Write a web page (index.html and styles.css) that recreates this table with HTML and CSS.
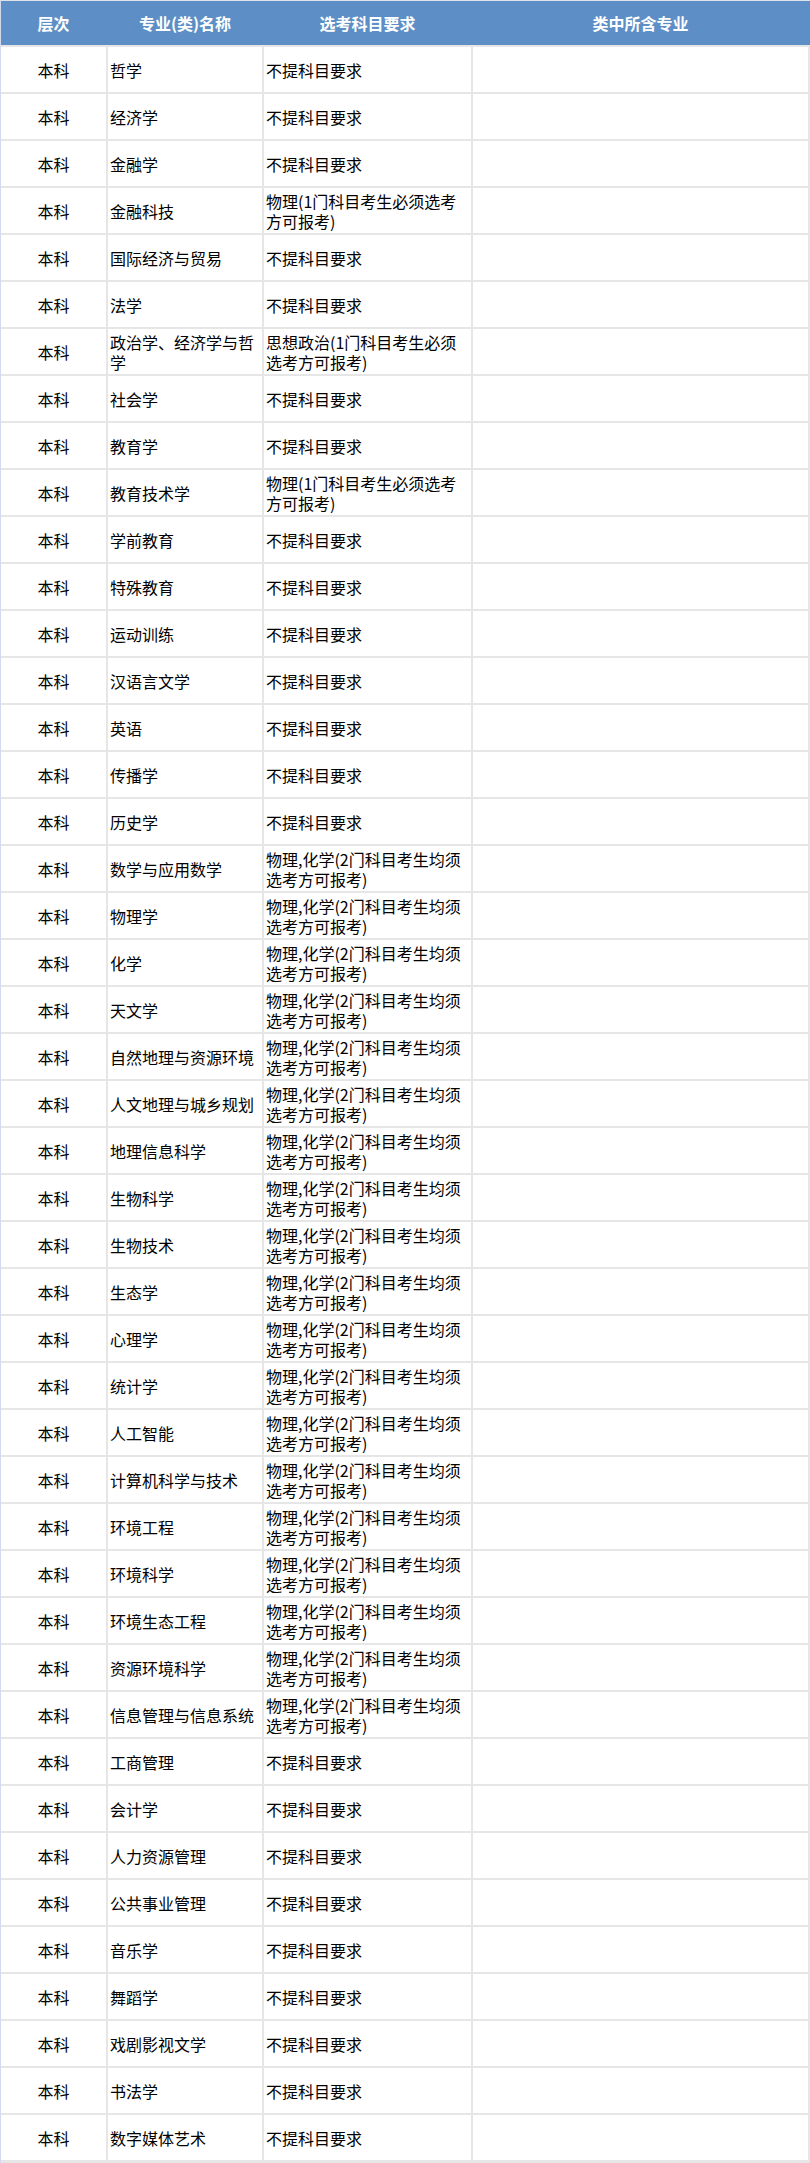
FILE: index.html
```html
<!DOCTYPE html>
<html lang="zh-CN">
<head>
<meta charset="utf-8">
<title>专业选考科目要求</title>
<link rel="stylesheet" href="styles.css">
</head>
<body>
<div class="sheet">
  <div class="head">
    <div class="hc">层次</div>
    <div class="hc">专业(类)名称</div>
    <div class="hc">选考科目要求</div>
    <div class="hc">类中所含专业</div>
  </div>
  <div class="rows">
    <div class="row"><div class="c lv">本科</div><div class="c">哲学</div><div class="c">不提科目要求</div><div class="c"></div></div>
    <div class="row"><div class="c lv">本科</div><div class="c">经济学</div><div class="c">不提科目要求</div><div class="c"></div></div>
    <div class="row"><div class="c lv">本科</div><div class="c">金融学</div><div class="c">不提科目要求</div><div class="c"></div></div>
    <div class="row"><div class="c lv">本科</div><div class="c">金融科技</div><div class="c">物理(1门科目考生必须选考方可报考)</div><div class="c"></div></div>
    <div class="row"><div class="c lv">本科</div><div class="c">国际经济与贸易</div><div class="c">不提科目要求</div><div class="c"></div></div>
    <div class="row"><div class="c lv">本科</div><div class="c">法学</div><div class="c">不提科目要求</div><div class="c"></div></div>
    <div class="row"><div class="c lv">本科</div><div class="c">政治学、经济学与哲学</div><div class="c">思想政治(1门科目考生必须选考方可报考)</div><div class="c"></div></div>
    <div class="row"><div class="c lv">本科</div><div class="c">社会学</div><div class="c">不提科目要求</div><div class="c"></div></div>
    <div class="row"><div class="c lv">本科</div><div class="c">教育学</div><div class="c">不提科目要求</div><div class="c"></div></div>
    <div class="row"><div class="c lv">本科</div><div class="c">教育技术学</div><div class="c">物理(1门科目考生必须选考方可报考)</div><div class="c"></div></div>
    <div class="row"><div class="c lv">本科</div><div class="c">学前教育</div><div class="c">不提科目要求</div><div class="c"></div></div>
    <div class="row"><div class="c lv">本科</div><div class="c">特殊教育</div><div class="c">不提科目要求</div><div class="c"></div></div>
    <div class="row"><div class="c lv">本科</div><div class="c">运动训练</div><div class="c">不提科目要求</div><div class="c"></div></div>
    <div class="row"><div class="c lv">本科</div><div class="c">汉语言文学</div><div class="c">不提科目要求</div><div class="c"></div></div>
    <div class="row"><div class="c lv">本科</div><div class="c">英语</div><div class="c">不提科目要求</div><div class="c"></div></div>
    <div class="row"><div class="c lv">本科</div><div class="c">传播学</div><div class="c">不提科目要求</div><div class="c"></div></div>
    <div class="row"><div class="c lv">本科</div><div class="c">历史学</div><div class="c">不提科目要求</div><div class="c"></div></div>
    <div class="row"><div class="c lv">本科</div><div class="c">数学与应用数学</div><div class="c">物理,化学(2门科目考生均须选考方可报考)</div><div class="c"></div></div>
    <div class="row"><div class="c lv">本科</div><div class="c">物理学</div><div class="c">物理,化学(2门科目考生均须选考方可报考)</div><div class="c"></div></div>
    <div class="row"><div class="c lv">本科</div><div class="c">化学</div><div class="c">物理,化学(2门科目考生均须选考方可报考)</div><div class="c"></div></div>
    <div class="row"><div class="c lv">本科</div><div class="c">天文学</div><div class="c">物理,化学(2门科目考生均须选考方可报考)</div><div class="c"></div></div>
    <div class="row"><div class="c lv">本科</div><div class="c">自然地理与资源环境</div><div class="c">物理,化学(2门科目考生均须选考方可报考)</div><div class="c"></div></div>
    <div class="row"><div class="c lv">本科</div><div class="c">人文地理与城乡规划</div><div class="c">物理,化学(2门科目考生均须选考方可报考)</div><div class="c"></div></div>
    <div class="row"><div class="c lv">本科</div><div class="c">地理信息科学</div><div class="c">物理,化学(2门科目考生均须选考方可报考)</div><div class="c"></div></div>
    <div class="row"><div class="c lv">本科</div><div class="c">生物科学</div><div class="c">物理,化学(2门科目考生均须选考方可报考)</div><div class="c"></div></div>
    <div class="row"><div class="c lv">本科</div><div class="c">生物技术</div><div class="c">物理,化学(2门科目考生均须选考方可报考)</div><div class="c"></div></div>
    <div class="row"><div class="c lv">本科</div><div class="c">生态学</div><div class="c">物理,化学(2门科目考生均须选考方可报考)</div><div class="c"></div></div>
    <div class="row"><div class="c lv">本科</div><div class="c">心理学</div><div class="c">物理,化学(2门科目考生均须选考方可报考)</div><div class="c"></div></div>
    <div class="row"><div class="c lv">本科</div><div class="c">统计学</div><div class="c">物理,化学(2门科目考生均须选考方可报考)</div><div class="c"></div></div>
    <div class="row"><div class="c lv">本科</div><div class="c">人工智能</div><div class="c">物理,化学(2门科目考生均须选考方可报考)</div><div class="c"></div></div>
    <div class="row"><div class="c lv">本科</div><div class="c">计算机科学与技术</div><div class="c">物理,化学(2门科目考生均须选考方可报考)</div><div class="c"></div></div>
    <div class="row"><div class="c lv">本科</div><div class="c">环境工程</div><div class="c">物理,化学(2门科目考生均须选考方可报考)</div><div class="c"></div></div>
    <div class="row"><div class="c lv">本科</div><div class="c">环境科学</div><div class="c">物理,化学(2门科目考生均须选考方可报考)</div><div class="c"></div></div>
    <div class="row"><div class="c lv">本科</div><div class="c">环境生态工程</div><div class="c">物理,化学(2门科目考生均须选考方可报考)</div><div class="c"></div></div>
    <div class="row"><div class="c lv">本科</div><div class="c">资源环境科学</div><div class="c">物理,化学(2门科目考生均须选考方可报考)</div><div class="c"></div></div>
    <div class="row"><div class="c lv">本科</div><div class="c">信息管理与信息系统</div><div class="c">物理,化学(2门科目考生均须选考方可报考)</div><div class="c"></div></div>
    <div class="row"><div class="c lv">本科</div><div class="c">工商管理</div><div class="c">不提科目要求</div><div class="c"></div></div>
    <div class="row"><div class="c lv">本科</div><div class="c">会计学</div><div class="c">不提科目要求</div><div class="c"></div></div>
    <div class="row"><div class="c lv">本科</div><div class="c">人力资源管理</div><div class="c">不提科目要求</div><div class="c"></div></div>
    <div class="row"><div class="c lv">本科</div><div class="c">公共事业管理</div><div class="c">不提科目要求</div><div class="c"></div></div>
    <div class="row"><div class="c lv">本科</div><div class="c">音乐学</div><div class="c">不提科目要求</div><div class="c"></div></div>
    <div class="row"><div class="c lv">本科</div><div class="c">舞蹈学</div><div class="c">不提科目要求</div><div class="c"></div></div>
    <div class="row"><div class="c lv">本科</div><div class="c">戏剧影视文学</div><div class="c">不提科目要求</div><div class="c"></div></div>
    <div class="row"><div class="c lv">本科</div><div class="c">书法学</div><div class="c">不提科目要求</div><div class="c"></div></div>
    <div class="row"><div class="c lv">本科</div><div class="c">数字媒体艺术</div><div class="c">不提科目要求</div><div class="c"></div></div>
  </div>
</div>
</body>
</html>
```
FILE: styles.css
```css
html, body {
  margin: 0;
  padding: 0;
  background: #ffffff;
}

.sheet {
  width: 809px;
  border-top: 1px solid #dfe2e8;
  border-left: 1px solid #d3daee;
  background: #e6e6e6;
  font-family: "Noto Sans CJK SC", "Noto Sans", sans-serif;
  font-size: 16px;
  line-height: 20px;
  color: #000000;
}

.head {
  display: grid;
  grid-template-columns: 105px 154px 207px 335px;
  column-gap: 2px;
  height: 44px;
  padding-right: 2px;
  background: #5d8fc6;
}

.hc {
  display: flex;
  align-items: center;
  justify-content: center;
  color: #ffffff;
  font-weight: bold;
}

.rows {
  display: flex;
  flex-direction: column;
  gap: 2px;
  padding: 2px 2px 3px 0;
}

.row {
  display: grid;
  grid-template-columns: 105px 154px 207px 335px;
  column-gap: 2px;
  height: 45px;
}

.c {
  display: flex;
  align-items: center;
  background: #ffffff;
  padding: 0 2px;
  overflow: hidden;
}

.c.lv {
  justify-content: center;
}
```
